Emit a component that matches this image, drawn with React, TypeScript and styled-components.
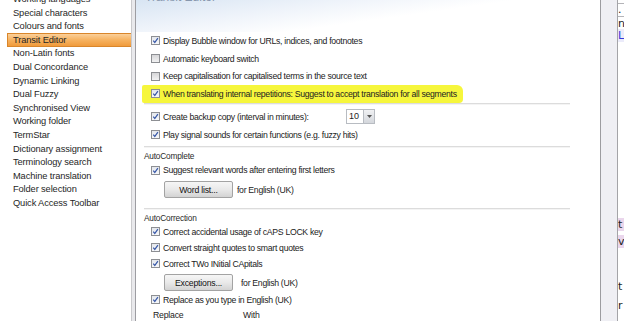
import styled, { createGlobalStyle } from 'styled-components';

const GlobalStyle = createGlobalStyle`
  html, body {
    margin: 0;
    padding: 0;
    background: #fff;
  }
  body {
    font-family: 'Liberation Sans', Arial, sans-serif;
    color: #1e1e1e;
  }
`;

const navItems = [
    'Working languages',
    'Special characters',
    'Colours and fonts',
    'Transit Editor',
    'Non-Latin fonts',
    'Dual Concordance',
    'Dynamic Linking',
    'Dual Fuzzy',
    'Synchronised View',
    'Working folder',
    'TermStar',
    'Dictionary assignment',
    'Terminology search',
    'Machine translation',
    'Folder selection',
    'Quick Access Toolbar',
];

const CheckBox = ({ checked }: { checked?: boolean }) => (
    <Box $checked={!!checked}>
        {checked && (
            <svg width="9" height="9" viewBox="0 0 9 9">
                <path
                    d="M1.6 4.6 L3.6 7 L7.6 1.4"
                    fill="none"
                    stroke="#3858a8"
                    strokeWidth="1.5"
                />
            </svg>
        )}
    </Box>
);

const App = () => {
    return (
        <>
            <GlobalStyle />
            <Window>
                <NavList>
                    {navItems.map((item) => (
                        <NavItem key={item} $active={item === 'Transit Editor'}>
                            {item}
                        </NavItem>
                    ))}
                </NavList>
                <Splitter />
                <Panel>
                    <Header>
                        <Title>Transit Editor</Title>
                    </Header>
                    <Content>
                        <CheckRow $h={17.7}>
                            <CheckBox checked />
                            <Label>Display Bubble window for URLs, indices, and footnotes</Label>
                        </CheckRow>
                        <CheckRow $h={17.7}>
                            <CheckBox />
                            <Label>Automatic keyboard switch</Label>
                        </CheckRow>
                        <CheckRow $h={17.7}>
                            <CheckBox />
                            <Label>Keep capitalisation for capitalised terms in the source text</Label>
                        </CheckRow>
                        <CheckRow $h={17.7} $marked>
                            <CheckBox checked />
                            <Label>
                                When translating internal repetitions: Suggest to accept translation for all segments
                            </Label>
                        </CheckRow>
                        <Divider />
                        <CheckRow $h={18} $top={3}>
                            <CheckBox checked />
                            <Label $width={183}>Create backup copy (interval in minutes):</Label>
                            <Dropdown>
                                <DropValue>10</DropValue>
                                <DropButton>
                                    <svg width="5" height="3" viewBox="0 0 5 3">
                                        <path d="M0 0 H5 L2.5 3 Z" fill="#555" />
                                    </svg>
                                </DropButton>
                            </Dropdown>
                        </CheckRow>
                        <CheckRow $h={18}>
                            <CheckBox checked />
                            <Label>Play signal sounds for certain functions (e.g. fuzzy hits)</Label>
                        </CheckRow>
                        <Divider $top={2} />
                        <SectionTitle>AutoComplete</SectionTitle>
                        <CheckRow $h={17}>
                            <CheckBox checked />
                            <Label>Suggest relevant words after entering first letters</Label>
                        </CheckRow>
                        <ButtonRow $gap={4}>
                            <Button>Word list...</Button>
                            <Label>for English (UK)</Label>
                        </ButtonRow>
                        <Divider $top={9} />
                        <SectionTitle>AutoCorrection</SectionTitle>
                        <CheckRow $h={16}>
                            <CheckBox checked />
                            <Label>Correct accidental usage of cAPS LOCK key</Label>
                        </CheckRow>
                        <CheckRow $h={16}>
                            <CheckBox checked />
                            <Label>Convert straight quotes to smart quotes</Label>
                        </CheckRow>
                        <CheckRow $h={16}>
                            <CheckBox checked />
                            <Label>Correct TWo INitial CApitals</Label>
                        </CheckRow>
                        <ButtonRow $gap={8}>
                            <Button>Exceptions...</Button>
                            <Label>for English (UK)</Label>
                        </ButtonRow>
                        <CheckRow $h={16}>
                            <CheckBox checked />
                            <Label>Replace as you type in English (UK)</Label>
                        </CheckRow>
                        <TableHead>
                            <HeadCell>Replace</HeadCell>
                            <HeadCell>With</HeadCell>
                        </TableHead>
                    </Content>
                </Panel>
                <SideStrip />
                <Peek>
                    <PeekRule $top={3} />
                    <PeekText $top={-1}>.</PeekText>
                    <PeekRule $top={0} />
                    <PeekText $top={0}>ne</PeekText>
                    <PeekText $top={-1} $bg="#ebebfa" $color="#3838d8">L</PeekText>
                    <PeekText $top={176} $bg="#ead6ec">t</PeekText>
                    <PeekText $top={4} $bg="#ead6ec">v</PeekText>
                    <PeekText $top={32}>t</PeekText>
                    <PeekText $top={6}>r</PeekText>
                </Peek>
            </Window>
        </>
    );
};

interface ActiveProps {
    $active: boolean;
}

interface RowProps {
    $h: number;
    $top?: number;
    $marked?: boolean;
}

interface TopProps {
    $top?: number;
}

const Window = styled.div`
    display: flex;
    width: 624px;
    height: 321px;
    overflow: hidden;
    background: #fff;
`;

const NavList = styled.div`
    display: flex;
    flex-direction: column;
    width: 131px;
    flex-shrink: 0;
    margin-top: -7.7px;
    background: #fff;
`;

const NavItem = styled.div<ActiveProps>`
    height: 13.6px;
    flex-shrink: 0;
    font-size: 9.3px;
    letter-spacing: -0.12px;
    padding-left: 5px;
    margin-left: 7px;
    white-space: nowrap;
    color: #262626;
    box-sizing: border-box;
    border: 1px solid ${(p) => (p.$active ? '#d9862b' : 'transparent')};
    border-right: none;
    background: ${(p) =>
        p.$active ? 'linear-gradient(#fbd09a, #f6b260 50%, #f09b3c)' : 'transparent'};
    display: flex;
    align-items: center;
`;

const Splitter = styled.div`
    width: 3px;
    flex-shrink: 0;
    background: #e9e9ec;
    border-left: 1px solid #c9c9cc;
    border-right: 1px solid #9d9da2;
`;

const Panel = styled.div`
    display: flex;
    flex-direction: column;
    width: 464px;
    flex-shrink: 0;
    background: #fff;
    border-right: 1px solid #9c9ca0;
`;

const Header = styled.div`
    height: 32px;
    flex-shrink: 0;
    overflow: hidden;
    background: linear-gradient(172deg, #d8e5f3 0%, #eef3fa 30%, #fff 55%);
`;

const Title = styled.div`
    margin-top: -10px;
    margin-left: 9px;
    font-size: 12px;
    color: #8797ad;
`;

const Content = styled.div`
    display: flex;
    flex-direction: column;
    flex-shrink: 0;
    width: 426px;
    margin-left: 8px;
`;

const CheckRow = styled.div<RowProps>`
    display: flex;
    align-items: center;
    flex-shrink: 0;
    align-self: ${(p) => (p.$marked ? 'flex-start' : 'stretch')};
    height: ${(p) => p.$h}px;
    margin-top: ${(p) => p.$top || 0}px;
    padding-right: ${(p) => (p.$marked ? '6px' : '0')};
    margin-left: ${(p) => (p.$marked ? '-2px' : '0')};
    padding-left: ${(p) => (p.$marked ? '9px' : '7px')};
    background: ${(p) => (p.$marked ? '#f6f63c' : 'transparent')};
    border-radius: ${(p) => (p.$marked ? '2px 6px 4px 2px' : '0')};
`;

const Box = styled.div<{ $checked: boolean }>`
    width: 9px;
    height: 9px;
    flex-shrink: 0;
    box-sizing: border-box;
    border: 1px solid #8d8f93;
    background: ${(p) =>
        p.$checked
            ? 'linear-gradient(#e4e7ec, #f7f8fa)'
            : 'linear-gradient(#d6d6d8, #f2f2f3)'};
    display: flex;
    align-items: center;
    justify-content: center;
    margin-right: 3px;

    svg {
        display: block;
    }
`;

const Label = styled.span<{ $width?: number }>`
    font-size: 8.7px;
    letter-spacing: -0.3px;
    white-space: nowrap;
    color: #222;
    width: ${(p) => (p.$width ? `${p.$width}px` : 'auto')};
    flex-shrink: 0;
`;

const Dropdown = styled.div`
    display: flex;
    width: 29px;
    height: 15px;
    box-sizing: border-box;
    border: 1px solid #b8bcc2;
    background: #fff;
`;

const DropValue = styled.div`
    flex: 1;
    font-size: 9px;
    line-height: 13px;
    padding-left: 2px;
`;

const DropButton = styled.div`
    width: 10px;
    display: flex;
    align-items: center;
    justify-content: center;
    background: linear-gradient(#f0f1f3, #d4d7dc);
    border-left: 1px solid #b8bcc2;
`;

const Divider = styled.div<TopProps>`
    height: 2px;
    flex-shrink: 0;
    margin-top: ${(p) => p.$top || 0}px;
    background: #dcdcdc;
    border-bottom: 1px solid #f4f4f4;
    box-sizing: border-box;
`;

const SectionTitle = styled.div`
    height: 12px;
    flex-shrink: 0;
    line-height: 12px;
    margin-top: 2px;
    font-size: 8.3px;
    letter-spacing: -0.2px;
    color: #2a2a2a;
`;

const ButtonRow = styled.div<{ $gap: number }>`
    display: flex;
    align-items: center;
    flex-shrink: 0;
    gap: ${(p) => p.$gap}px;
    margin-top: 2px;
    height: 18px;
    padding-left: 20px;
`;

const Button = styled.div`
    width: 69px;
    height: 17px;
    box-sizing: border-box;
    border: 1px solid #a3a3a3;
    border-radius: 2px;
    background: linear-gradient(#f6f6f6, #e9e9e9 50%, #d3d3d3);
    font-size: 8.7px;
    letter-spacing: -0.2px;
    color: #111;
    display: flex;
    align-items: center;
    justify-content: center;
`;

const TableHead = styled.div`
    display: grid;
    grid-template-columns: 90px 1fr;
    flex-shrink: 0;
    height: 14px;
    padding-left: 9px;
    align-items: center;
    margin-right: 140px;
    border-bottom: 1px solid #e2e2e2;
`;

const HeadCell = styled.div`
    font-size: 8.7px;
    letter-spacing: -0.2px;
    color: #222;
`;

const SideStrip = styled.div`
    width: 16px;
    flex-shrink: 0;
    background: #efeff4;
    border-right: 1px solid #a4a4a8;
`;

const Peek = styled.div`
    flex: 1;
    display: flex;
    flex-direction: column;
    overflow: hidden;
    background: #fff;
`;

const PeekRule = styled.div<TopProps>`
    height: 1px;
    flex-shrink: 0;
    margin-top: ${(p) => p.$top || 0}px;
    background: #b4b4b8;
`;

const PeekText = styled.div<TopProps & { $bg?: string; $color?: string }>`
    margin-top: ${(p) => p.$top || 0}px;
    flex-shrink: 0;
    height: 13px;
    line-height: 13px;
    font-size: 11px;
    font-family: 'DejaVu Sans', sans-serif;
    color: ${(p) => p.$color || '#222'};
    background: ${(p) => p.$bg || 'transparent'};
    white-space: nowrap;
`;

export default App;
